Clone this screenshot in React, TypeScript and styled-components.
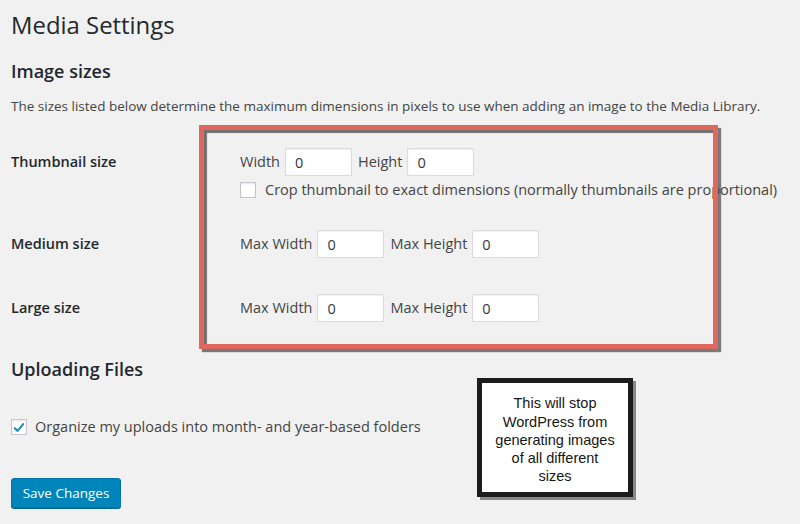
import React from "react";
import styled, { createGlobalStyle } from "styled-components";

const Global = createGlobalStyle`
  html, body { margin: 0; padding: 0; background: #f1f1f1; }
  body { font-family: "Open Sans", "Noto Sans", sans-serif; color: #444; }
  * { box-sizing: border-box; }
`;

const Page = styled.div`
  position: relative;
  width: 800px;
  height: 524px;
  overflow: hidden;
  padding: 10px 0 0 11px;
`;

const Title = styled.h1`
  margin: 0;
  font-size: 23.9px;
  font-weight: 400;
  line-height: 29px;
  color: #23282d;
`;

const SectionTitle = styled.h2<{ $top: number }>`
  margin: ${(p) => p.$top}px 0 0;
  font-size: 18px;
  font-weight: 600;
  line-height: 24px;
  color: #23282d;
`;

const Description = styled.p`
  margin: 13px 0 0;
  font-size: 13.5px;
  line-height: 20px;
  color: #444;
  white-space: nowrap;
`;

const SizesGrid = styled.div`
  margin-top: 17px;
  display: grid;
  grid-template-columns: 229px 1fr;
  grid-template-rows: 82px 64px 64px;
`;

const RowLabel = styled.div<{ $row: number }>`
  grid-column: 1;
  grid-row: ${(p) => p.$row};
  padding-top: 20px;
  font-size: 14.5px;
  font-weight: 600;
  line-height: 18px;
  color: #23282d;
`;

const FieldCell = styled.div<{ $row: number }>`
  grid-column: 2;
  grid-row: ${(p) => p.$row};
  padding-top: 15px;
  display: flex;
  flex-direction: column;
  gap: 5px;
`;

const InputRow = styled.div`
  display: flex;
  align-items: center;
  gap: 5px;
  font-size: 14.5px;
  color: #444;
  white-space: nowrap;
`;

const FieldLabel = styled.span<{ $gapBefore?: boolean }>`
  margin-left: ${(p) => (p.$gapBefore ? "1px" : "0")};
  line-height: 28px;
`;

const NumberInput = styled.input`
  width: 67px;
  height: 28px;
  margin: 0;
  padding: 0 9px;
  border: 1px solid #dcdcdc;
  box-shadow: inset 0 1px 2px rgba(0, 0, 0, 0.07);
  background: #fff;
  font-family: "Open Sans", "Noto Sans", sans-serif;
  font-size: 14.5px;
  color: #32373c;
  outline: none;
`;

const CheckLine = styled.label<{ $gap: number }>`
  display: flex;
  align-items: center;
  gap: ${(p) => p.$gap}px;
  font-size: 14.5px;
  line-height: 18px;
  color: #444;
  white-space: nowrap;
`;

const CheckBox = styled.span`
  flex: none;
  width: 16px;
  height: 16px;
  background: #fff;
  border: 1px solid #c3c6ca;
  box-shadow: inset 0 1px 2px rgba(0, 0, 0, 0.1);
  display: flex;
  align-items: center;
  justify-content: center;
`;

const Highlight = styled.div`
  grid-column: 2;
  grid-row: 1 / 4;
  justify-self: start;
  width: 519px;
  margin: -8px 0 -6px -41px;
  border: 5px solid #e0675d;
  box-shadow: inset 3px 3px 1px rgba(70, 70, 70, 0.75),
    3px 3px 1px rgba(70, 70, 70, 0.7);
  pointer-events: none;
  z-index: 1;
`;

const UploadLine = styled.div`
  margin-top: 34px;
  height: 24px;
  display: flex;
  align-items: center;
`;

const SaveButton = styled.button`
  margin-top: 39px;
  width: 110px;
  height: 30px;
  padding: 0;
  background: #0085ba;
  border: 1px solid #0073aa;
  border-radius: 3px;
  box-shadow: 0 1px 0 #006799;
  color: #fff;
  font-family: "Open Sans", "Noto Sans", sans-serif;
  font-size: 13.5px;
  line-height: 28px;
  display: block;
`;

const Note = styled.div`
  position: absolute;
  left: 477px;
  top: 378px;
  width: 156px;
  height: 119px;
  background: #fff;
  border: 5px solid #1c1c1c;
  box-shadow: 3px 3px 0 rgba(110, 110, 110, 0.8);
  display: flex;
  align-items: center;
  justify-content: center;
  text-align: center;
  font-family: "Liberation Sans", Arial, sans-serif;
  font-size: 14.5px;
  line-height: 18.3px;
  color: #161616;
  padding: 5px 4px 0;
  white-space: nowrap;
`;

const Check = () => (
  <svg width="16" height="16" viewBox="0 0 16 16" style={{ marginTop: 1 }}>
    <path
      d="M3.2 8.2 L6.4 11.3 L12.8 3.6"
      fill="none"
      stroke="#1e8cbe"
      strokeWidth="2.4"
      strokeLinecap="round"
      strokeLinejoin="round"
    />
  </svg>
);

export default function App() {
  return (
    <Page>
      <Global />
      <Title>Media Settings</Title>
      <SectionTitle $top={20}>Image sizes</SectionTitle>
      <Description>
        The sizes listed below determine the maximum dimensions in pixels to use
        when adding an image to the Media Library.
      </Description>

      <SizesGrid>
        <RowLabel $row={1}>Thumbnail size</RowLabel>
        <FieldCell $row={1}>
          <InputRow>
            <FieldLabel>Width</FieldLabel>
            <NumberInput defaultValue="0" />
            <FieldLabel $gapBefore>Height</FieldLabel>
            <NumberInput defaultValue="0" />
          </InputRow>
          <CheckLine $gap={9}>
            <CheckBox />
            Crop thumbnail to exact dimensions (normally thumbnails are
            proportional)
          </CheckLine>
        </FieldCell>

        <RowLabel $row={2}>Medium size</RowLabel>
        <FieldCell $row={2}>
          <InputRow>
            <FieldLabel>Max Width</FieldLabel>
            <NumberInput defaultValue="0" />
            <FieldLabel $gapBefore>Max Height</FieldLabel>
            <NumberInput defaultValue="0" />
          </InputRow>
        </FieldCell>

        <RowLabel $row={3}>Large size</RowLabel>
        <FieldCell $row={3}>
          <InputRow>
            <FieldLabel>Max Width</FieldLabel>
            <NumberInput defaultValue="0" />
            <FieldLabel $gapBefore>Max Height</FieldLabel>
            <NumberInput defaultValue="0" />
          </InputRow>
        </FieldCell>

        <Highlight />
      </SizesGrid>

      <SectionTitle $top={14}>Uploading Files</SectionTitle>
      <UploadLine>
        <CheckLine $gap={8}>
          <CheckBox>
            <Check />
          </CheckBox>
          Organize my uploads into month- and year-based folders
        </CheckLine>
      </UploadLine>

      <SaveButton>Save Changes</SaveButton>

      <Note>
        This will stop
        <br />
        WordPress from
        <br />
        generating images
        <br />
        of all different
        <br />
        sizes
      </Note>
    </Page>
  );
}
